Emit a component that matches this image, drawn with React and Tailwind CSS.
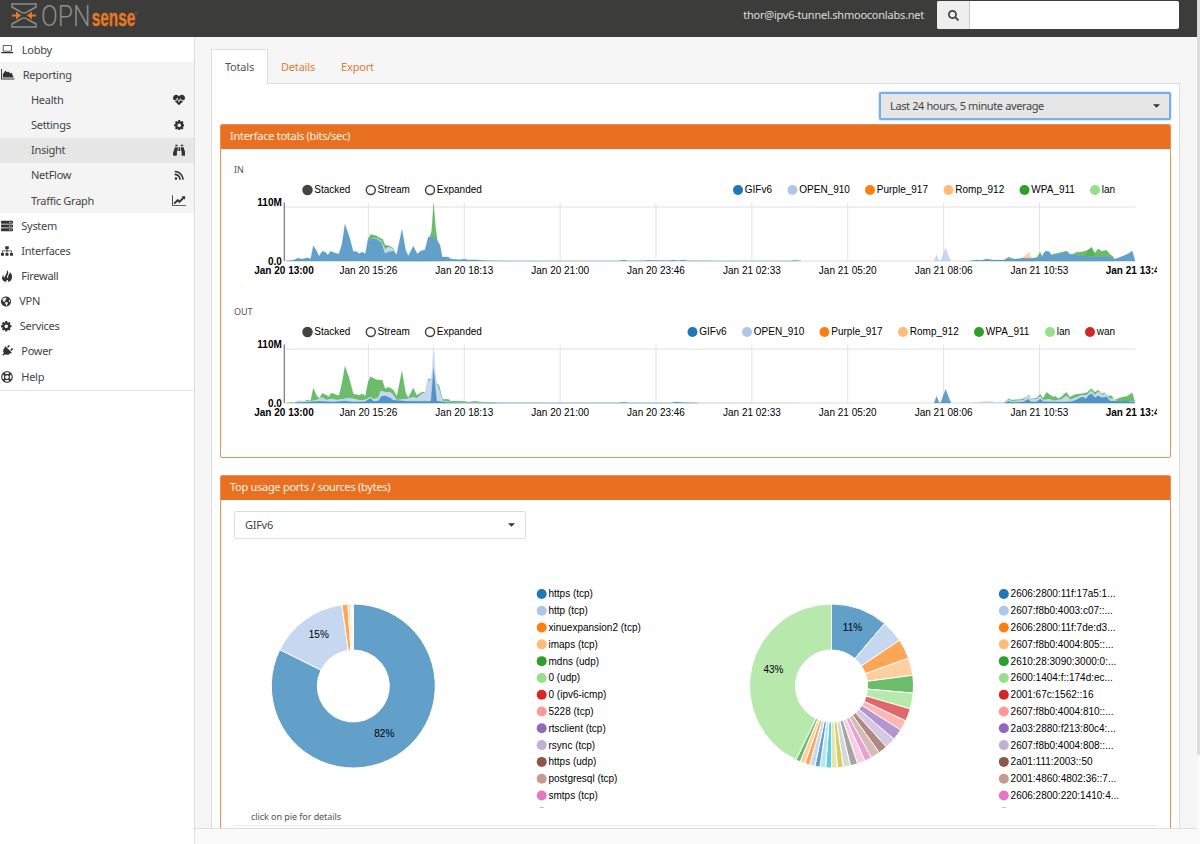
import React from 'react';
import {
  FaBinoculars,
  FaGlobeAmericas,
  FaHeartbeat,
  FaPlug,
  FaRegLifeRing,
  FaRss,
  FaSearch,
  FaServer,
  FaSitemap,
} from 'react-icons/fa';

// d3 category20
const COLORS = [
  '#1f77b4', '#aec7e8', '#ff7f0e', '#ffbb78', '#2ca02c', '#98df8a', '#d62728', '#ff9896', '#9467bd', '#c5b0d5',
  '#8c564b', '#c49c94', '#e377c2', '#f7b6d2', '#7f7f7f', '#c7c7c7', '#bcbd22', '#dbdb8d', '#17becf', '#9edae5',
];

const LaptopIcon = ({ className }) => (
  <svg className={className} viewBox="0 128 1920 1408" fill="currentColor">
    <path d="M416 1152q-66 0-113-47t-47-113v-704q0-66 47-113t113-47h1088q66 0 113 47t47 113v704q0 66-47 113t-113 47h-1088zm-32-864v704q0 13 9.500 22.500t22.500 9.500h1088q13 0 22.500-9.500t9.500-22.500v-704q0-13-9.500-22.500t-22.500-9.500h-1088q-13 0-22.500 9.500t-9.500 22.500zm1376 928h160v96q0 40-47 68t-113 28h-1600q-66 0-113-28t-47-68v-96h1760z" />
  </svg>
);

const AreaIcon = ({ className }) => (
  <svg className={className} viewBox="0 0 14 11" fill="currentColor">
    <path d="M0 0h1v10h13v1H0zM1.800 9V5.500L4.500 1.500l1.700 2L7.500 2.500l2 2 1.500-.5L13.200 9z" />
  </svg>
);

const LineIcon = ({ className }) => (
  <svg className={className} viewBox="0 128 2048 1536" fill="currentColor">
    <path d="M2048 1536v128h-2048v-1536h128v1408h1920zm-128-1248v435q0 21-19.500 29.500t-35.500-7.500l-121-121-633 633q-10 10-23 10t-23-10l-233-233-416 416-192-192 585-585q10-10 23-10t23 10l233 233 464-464-121-121q-16-16-7.500-35.500t29.500-19.500h435q14 0 23 9t9 23z" />
  </svg>
);

const CogIcon = ({ className }) => (
  <svg className={className} viewBox="128 128 1536 1536" fill="currentColor">
    <path d="M1152 896q0-106-75-181t-181-75-181 75-75 181 75 181 181 75 181-75 75-181zm512-109v222q0 12-8 23t-20 13l-185 28q-19 54-39 91 35 50 107 138 10 12 10 25t-9 23q-27 37-99 108t-94 71q-12 0-26-9l-138-108q-44 23-91 38-16 136-29 186-7 28-36 28h-222q-14 0-24.500-8.500t-11.500-21.500l-28-184q-49-16-90-37l-141 107q-10 9-25 9-14 0-25-11-126-114-165-168-7-10-7-23 0-12 8-23 15-21 51-66.500t54-70.500q-27-50-41-99l-183-27q-13-2-21-12.500t-8-23.500v-222q0-12 8-23t19-13l186-28q14-46 39-92-40-57-107-138-10-12-10-24 0-10 9-23 26-36 98.500-107.500t94.500-71.500q13 0 26 10l138 107q44-23 91-38 16-136 29-186 7-28 36-28h222q14 0 24.500 8.500t11.500 21.500l28 184q49 16 90 37l142-107q9-9 24-9 13 0 25 10 129 119 165 170 7 8 7 22 0 12-8 23-15 21-51 66.500t-54 70.500q26 50 41 98l183 28q13 2 21 12.500t8 23.500z" />
  </svg>
);

const FireIcon = ({ className }) => (
  <svg className={className} viewBox="0 0 10 12" fill="currentColor">
    <path d="M4.800 0C7 1.800 6.300 3.600 5.600 5 4.900 6.300 4.700 7.200 5.600 8c.9-.8.6-1.800.6-2.600C7.300 4.300 8 3.300 7.800 2 9.600 3.400 10.200 5.300 10 7.200 9.800 9.800 8.300 11.500 6 12c.5-1 .3-1.700-.6-2.300C4.400 10.300 4 11 4.300 12 1.600 11.500.2 10.200 0 8.300 0 7 .5 5.900 1.500 5c0 1.400.2 2.300 1 3C2.300 6 5.800 3.500 4.800 0z" />
  </svg>
);

const Caret = () => (
  <svg className="w-[7px] h-1" viewBox="0 0 8 4">
    <path d="M0 0h8L4 4z" fill="#333" />
  </svg>
);

const menu = [
  { name: 'Lobby', icon: LaptopIcon, size: 'w-[12.500px] h-[9px]' },
  {
    name: 'Reporting',
    icon: AreaIcon,
    size: 'w-[13.500px] h-[10.500px]',
    children: [
      { name: 'Health', icon: FaHeartbeat, size: 'w-3 h-3' },
      { name: 'Settings', icon: CogIcon, size: 'w-[10.500px] h-[10.500px]' },
      { name: 'Insight', icon: FaBinoculars, size: 'w-[12.500px] h-[12.500px]', active: true },
      { name: 'NetFlow', icon: FaRss, size: 'w-[10.500px] h-[10.500px]' },
      { name: 'Traffic Graph', icon: LineIcon, size: 'w-[14px] h-[11px]' },
    ],
  },
  { name: 'System', icon: FaServer, size: 'w-3 h-3' },
  { name: 'Interfaces', icon: FaSitemap, size: 'w-3 h-3' },
  { name: 'Firewall', icon: FireIcon, size: 'w-3 h-[12px]' },
  { name: 'VPN', icon: FaGlobeAmericas, size: 'w-[10px] h-[11px]' },
  { name: 'Services', icon: CogIcon, size: 'w-[10.500px] h-[10.500px]' },
  { name: 'Power', icon: FaPlug, size: 'w-3 h-3 rotate-45' },
  { name: 'Help', icon: FaRegLifeRing, size: 'w-3 h-3' },
];

const ticks = ['Jan 20 15:26', 'Jan 20 18:13', 'Jan 20 21:00', 'Jan 20 23:46', 'Jan 21 02:33', 'Jan 21 05:20', 'Jan 21 08:06', 'Jan 21 10:53'];

// Samples are [x, height] in thirds of a pixel, drawn back to front.
const inSeries = [
  { color: 4, points: [[249, 58], [252, 68], [260, 80], [277, 75], [291, 67], [295, 66], [302, 47], [314, 46], [327, 38], [335, 20], [340, 0], [432, 0], [437, 72], [442, 90], [448, 174], [454, 100], [459, 62], [474, 0]] },
  { color: 1, white: true, points: [[249, 60], [262, 69], [277, 68], [291, 60], [302, 35], [314, 42], [327, 36], [337, 10]] },
  { color: 0, white: true, points: [[7, 0], [27, 2], [42, 9], [52, 5], [69, 10], [79, 6], [87, 45], [97, 30], [104, 14], [114, 29], [124, 26], [130, 17], [139, 29], [152, 24], [164, 21], [173, 50], [182, 110], [195, 73], [207, 28], [215, 29], [225, 22], [234, 27], [243, 21], [251, 60], [260, 68], [277, 66], [291, 56], [302, 22], [312, 27], [327, 30], [337, 19], [353, 94], [364, 33], [372, 15], [387, 44], [399, 21], [409, 30], [422, 33], [432, 72], [442, 71], [452, 72], [462, 56], [467, 48], [474, 12], [492, 12], [499, 6], [527, 4], [540, 6], [552, 3], [572, 4], [587, 2], [617, 1], [657, 0], [900, 0], [1000, 0], [1020, 3], [1032, 0], [1080, 1], [1090, 2], [1150, 1], [1169, 3], [1180, 1], [1196, 3], [1210, 1], [1300, 0], [1520, 0], [1530, 2], [1550, 0]] },
  { color: 1, points: [[1950, 0], [1957, 19], [1964, 0], [1970, 2], [1984, 40], [1999, 0]] },
  { color: 3, points: [[2210, 5], [2217, 12], [2227, 19], [2234, 26], [2240, 10], [2246, 0]] },
  { color: 5, points: [[2405, 20], [2422, 45], [2430, 20]] },
  { color: 4, points: [[2160, 3], [2173, 12], [2182, 8], [2195, 5], [2257, 10], [2268, 26], [2274, 14], [2280, 14], [2345, 29], [2362, 19], [2377, 26], [2392, 27], [2405, 30], [2414, 35], [2422, 40], [2432, 24], [2442, 37], [2452, 29], [2467, 32], [2477, 20], [2487, 13], [2492, 3]] },
  { color: 0, white: true, points: [[2057, 0], [2077, 3], [2092, 2], [2107, 6], [2127, 3], [2162, 3], [2173, 8], [2187, 5], [2202, 7], [2217, 9], [2232, 7], [2242, 8], [2257, 9], [2268, 14], [2274, 11], [2277, 22], [2285, 30], [2295, 28], [2303, 16], [2314, 20], [2332, 20], [2347, 30], [2357, 19], [2370, 20], [2387, 16], [2407, 15], [2427, 13], [2447, 14], [2467, 14], [2477, 11], [2492, 6], [2507, 11], [2517, 15], [2532, 22], [2544, 30], [2552, 2]] },
];

const outSeries = [
  { color: 4, points: [[7, 0], [32, 2], [44, 7], [54, 3], [69, 9], [79, 6], [87, 44], [97, 22], [105, 14], [114, 29], [127, 23], [134, 18], [141, 30], [164, 22], [173, 58], [182, 110], [195, 73], [207, 27], [225, 23], [234, 28], [243, 20], [251, 60], [258, 79], [277, 70], [294, 68], [302, 43], [314, 47], [327, 39], [338, 20], [353, 96], [364, 30], [372, 16], [387, 45], [397, 23], [414, 33], [423, 32], [432, 73], [439, 71], [459, 58], [464, 53], [475, 11], [492, 11], [499, 6], [537, 5], [552, 3], [572, 5], [597, 2], [637, 0]] },
  { color: 1, white: true, points: [[27, 2], [44, 7], [77, 5], [97, 9], [112, 17], [127, 9], [142, 13], [157, 9], [177, 12], [197, 15], [227, 8], [244, 10], [259, 19], [267, 11], [282, 16], [289, 36], [302, 33], [317, 33], [327, 23], [337, 9], [367, 12], [387, 18], [397, 14], [414, 28], [423, 32], [429, 66], [439, 68], [443, 90], [448, 174], [453, 90], [458, 58], [467, 33], [475, 6], [507, 3], [600, 1], [700, 0], [1540, 0]] },
  { color: 0, points: [[32, 1], [107, 5], [147, 3], [182, 6], [207, 3], [242, 4], [259, 14], [267, 5], [282, 6], [292, 20], [304, 21], [317, 16], [327, 8], [367, 5], [407, 5], [440, 5], [448, 103], [457, 6], [487, 2], [537, 1], [600, 0], [1000, 0], [1020, 2], [1032, 0], [1160, 0], [1175, 3], [1200, 1], [1240, 0]] },
  { color: 0, points: [[1950, 0], [1957, 20], [1965, 0], [1970, 2], [1984, 41], [2000, 0]] },
  { color: 4, points: [[2162, 3], [2173, 13], [2182, 9], [2212, 11], [2224, 16], [2234, 25], [2240, 12], [2257, 15], [2268, 26], [2277, 14], [2287, 32], [2301, 22], [2307, 18], [2314, 20], [2322, 13], [2332, 19], [2346, 32], [2357, 18], [2375, 26], [2392, 28], [2407, 31], [2422, 43], [2432, 32], [2442, 39], [2452, 28], [2462, 31], [2472, 22], [2482, 22], [2492, 9], [2507, 16], [2529, 20], [2544, 31], [2552, 3]] },
  { color: 1, white: true, points: [[2057, 0], [2087, 3], [2107, 5], [2137, 2], [2162, 4], [2173, 10], [2182, 6], [2217, 8], [2224, 14], [2234, 23], [2240, 10], [2257, 12], [2268, 20], [2277, 9], [2295, 11], [2312, 7], [2332, 11], [2347, 22], [2359, 10], [2372, 16], [2392, 23], [2407, 24], [2422, 37], [2432, 24], [2442, 34], [2455, 24], [2465, 30], [2477, 12], [2487, 14], [2499, 5], [2517, 6], [2544, 5], [2552, 1]] },
  { color: 0, points: [[2162, 1], [2173, 5], [2182, 2], [2217, 3], [2232, 11], [2239, 4], [2257, 3], [2268, 12], [2277, 4], [2337, 3], [2362, 4], [2377, 10], [2392, 17], [2399, 17], [2405, 11], [2412, 22], [2422, 28], [2432, 16], [2442, 22], [2452, 16], [2467, 19], [2477, 6], [2507, 5], [2527, 6], [2544, 3], [2552, 1]] },
];

const area = (points) => {
  const last = points[points.length - 1];
  return `M${points[0][0]} 0L${points.map(([x, h]) => `${x} ${-h}`).join('L')}L${last[0]} 0Z`;
};

const controls = [
  { name: 'Stacked', x: 73.5, on: true },
  { name: 'Stream', x: 136.8 },
  { name: 'Expanded', x: 196 },
];

const StackedChart = ({ label, series, legend }) => (
  <div className="pt-[14px]">
    <div className="h-[14px] leading-[14px] text-[9px] tracking-normal text-[#555]">{label}</div>
    <svg className="block w-[923px] h-[114px] overflow-hidden [font-family:'Liberation_Sans',Arial,sans-serif] text-[10px] tracking-normal" viewBox="0 0 923 114">
      {controls.map((c) => (
        <g key={c.name} transform={`translate(${c.x} 13)`}>
          <circle r="4.500" fill={c.on ? '#444' : '#fff'} stroke="#444" strokeWidth="1.500" />
          <text x="6.800" y="3.400">{c.name}</text>
        </g>
      ))}
      {legend.map(([name, x], i) => (
        <g key={name} transform={`translate(${x} 13)`}>
          <circle r="5" fill={COLORS[i]} />
          <text x="6.800" y="3.400">{name}</text>
        </g>
      ))}
      <path d="M50.300 30H901.500" stroke="#e0e0e0" fill="none" />
      {ticks.map((tick, i) => (
        <g key={tick} transform={`translate(${134.4 + i * 95.87} 0)`}>
          <path d="M0 25.500V84" stroke="#e3e3e3" />
          <text x="0" y="97" textAnchor="middle">{tick}</text>
        </g>
      ))}
      <path d="M50.300 84H901.500" stroke="#ddd" />
      <g transform="translate(50.3 84) scale(0.3333)">
        {series.map((s, i) => (
          <g key={i}>
            {s.white && <path d={area(s.points)} fill="#fff" />}
            <path d={area(s.points)} fill={COLORS[s.color]} fillOpacity="0.7" stroke={COLORS[s.color]} strokeOpacity="0.5" strokeWidth="1" />
          </g>
        ))}
      </g>
      <path d="M50.300 25.500V84" stroke="#777" strokeWidth="1.200" />
      <g fontWeight="700">
        <text x="47.800" y="29" textAnchor="end">110M</text>
        <text x="47.800" y="87.500" textAnchor="end">0.0</text>
        <text x="50" y="97" textAnchor="middle">Jan 20 13:00</text>
        <text x="901.500" y="97" textAnchor="middle">Jan 21 13:47</text>
      </g>
    </svg>
  </div>
);

const slice = (from, to) => {
  const at = (deg, r) => {
    const a = (deg * Math.PI) / 180;
    return `${(r * Math.sin(a)).toFixed(2)} ${(-r * Math.cos(a)).toFixed(2)}`;
  };
  const large = to - from > 180 ? 1 : 0;
  return `M${at(from, 82)}A82 82 0 ${large} 1 ${at(to, 82)}L${at(to, 36)}A36 36 0 ${large} 0 ${at(from, 36)}Z`;
};

const portAngles = [0, 296.3, 352, 356.2, 357.8, 358.8, 359.4, 360];
const sourceAngles = [
  0, 40.4, 56.1, 70.1, 82.5, 95, 106.2, 115.2, 122.5, 130.4, 138, 144.4, 150.9, 156, 161.5, 166.7, 171.7, 175.9, 180,
  184.1, 188.1, 191.7, 195.5, 199, 202.5, 205.7, 360,
];

const ports = [
  'https (tcp)', 'http (tcp)', 'xinuexpansion2 (tcp)', 'imaps (tcp)', 'mdns (udp)', '0 (udp)', '0 (ipv6-icmp)',
  '5228 (tcp)', 'rtsclient (tcp)', 'rsync (tcp)', 'https (udp)', 'postgresql (tcp)', 'smtps (tcp)', '',
];
const sources = [
  '2606:2800:11f:17a5:1...', '2607:f8b0:4003:c07::...', '2606:2800:11f:7de:d3...', '2607:f8b0:4004:805::...',
  '2610:28:3090:3000:0:...', '2600:1404:f::174d:ec...', '2001:67c:1562::16', '2607:f8b0:4004:810::...',
  '2a03:2880:f213:80c4:...', '2607:f8b0:4004:808::...', '2a01:111:2003::50', '2001:4860:4802:36::7...',
  '2606:2800:220:1410:4...', '',
];

const PieChart = ({ cx, legendX, angles, labels, legend }) => (
  <svg className="block shrink-0 w-[462px] h-[253px] overflow-hidden [font-family:'Liberation_Sans',Arial,sans-serif] text-[10px] tracking-normal" viewBox="0 0 462 253">
    <g transform={`translate(${cx} 131)`}>
      {angles.slice(1).map((to, i) => (
        <path key={to} d={slice(angles[i], to)} fill={COLORS[i % 20]} fillOpacity="0.7" stroke="#fff" />
      ))}
      {labels.map(([text, x, y]) => (
        <text key={text} x={x} y={y} textAnchor="middle">{text}</text>
      ))}
    </g>
    {legend.map((name, i) => (
      <g key={i} transform={`translate(${legendX} ${39 + i * 16.79})`}>
        <circle r="5" fill={i === 13 ? '#999' : COLORS[i]} />
        {name && <text x="6.800" y="3.400">{name}</text>}
      </g>
    ))}
  </svg>
);

const Logo = () => (
  <svg className="w-[130px] h-[37px] ml-[10px] shrink-0 overflow-visible tracking-normal" viewBox="0 0 130 37">
    <g fill="none" stroke="#8c8c8a" strokeWidth="1.500">
      <path d="M2 4H26V7L18 11.500Q14 14.500 10 11.500L2 7ZM2 27H26V24L18 19.500Q14 16.500 10 19.500L2 24Z" />
    </g>
    <path d="M2 14.500h4v-3l5 4-5 4v-3H2zM26 14.500h-4v-3l-5 4 5 4v-3h4z" fill="#e87722" />
    <text x="31" y="25.800" textLength="49.500" lengthAdjust="spacingAndGlyphs" className="[font-family:Roboto,sans-serif] text-[29.500px] font-light" fill="#8c8c8a">OPN</text>
    <text x="81.800" y="26.300" textLength="43.500" lengthAdjust="spacingAndGlyphs" className="[font-family:'Liberation_Sans',sans-serif] text-[23px] font-bold" fill="#e87722" stroke="#e87722" strokeWidth="0.400">sense</text>
    <circle cx="126" cy="13" r="1" fill="none" stroke="#777" strokeWidth="0.500" />
  </svg>
);

const Header = () => (
  <header className="flex items-start justify-between h-[37px] w-[1197px] shrink-0 bg-[#3c3c3b]">
    <Logo />
    <div className="flex items-center mt-px mr-[18px]">
      <span className="mr-[13px] tracking-[-0.230px] text-[#ddd]">thor@ipv6-tunnel.shmooconlabs.net</span>
      <div className="flex w-[242px] h-7 overflow-hidden rounded-[2px] bg-white">
        <div className="flex items-center justify-center w-[33px] bg-[#eee] border-r border-[#ccc] text-[#444]">
          <FaSearch className="w-[11px] h-[11px]" />
        </div>
        <div className="flex-1" />
      </div>
    </div>
  </header>
);

const Sidebar = () => (
  <nav className="w-[195px] shrink-0 bg-white border-r border-[#ddd] text-[#444]">
    <div className="border-b border-[#e3e3e3] pb-px">
      {menu.map(({ name, icon: Icon, size, children }) => (
        <div key={name} className={children ? 'bg-[#f4f4f4]' : ''}>
          <div className="flex items-center h-[25.170px] pl-px gap-[8.300px]">
            <Icon className={`shrink-0 text-[#333] ${size}`} />
            {name}
          </div>
          {children?.map(({ name: label, icon: ChildIcon, size: childSize, active }) => (
            <div key={label} className={`flex items-center justify-between h-[25.170px] pl-[31px] pr-2 ${active ? 'bg-[#e6e6e6]' : ''}`}>
              {label}
              <span className="flex justify-center w-[14px]">
                <ChildIcon className={`shrink-0 text-[#333] ${childSize}`} />
              </span>
            </div>
          ))}
        </div>
      ))}
    </div>
  </nav>
);

const Panel = ({ title, className, children }) => (
  <section className={`rounded-[2px] border border-[#e4925a] overflow-hidden bg-white ${className}`}>
    <h3 className="h-[23.500px] leading-[22px] pl-[9px] bg-[#e87020] text-[#fff3e8]">{title}</h3>
    <div className="pl-[13px]">{children}</div>
  </section>
);

const inLegend = [['GIFv6', 504], ['OPEN_910', 558.5], ['Purple_917', 636], ['Romp_912', 714.5], ['WPA_911', 790.5], ['lan', 861]];
const outLegend = [['GIFv6', 458.5], ['OPEN_910', 513], ['Purple_917', 590.5], ['Romp_912', 669], ['WPA_911', 745], ['lan', 816], ['wan', 856]];

export default function App() {
  return (
    <div className="flex flex-col w-[1200px] h-[844px] overflow-hidden bg-[#fafafa] [font-family:'Noto_Sans',sans-serif] text-[11px] leading-[16px] tracking-[-0.280px]">
      <div className="flex h-full">
        <div className="flex flex-col w-[1197px]">
          <Header />
          <div className="flex flex-1 min-h-0">
            <Sidebar />
            <div className="flex flex-col flex-1 min-w-0">
              <main className="h-[791px] overflow-hidden pt-3 pl-4 pr-[17px] bg-[#f6f6f6]">
                <div className="flex relative z-10 tracking-[-0.180px]">
                  <div className="w-[57px] h-[35px] pt-[9px] text-center bg-white border border-b-0 border-[#ddd] text-[#555]">Totals</div>
                  <div className="w-[60px] h-[34px] pt-[10px] text-center text-[#e07a35]">Details</div>
                  <div className="w-[59px] h-[34px] pt-[10px] text-center text-[#e07a35]">Export</div>
                </div>
                <div className="h-[760px] -mt-px pl-2 pr-2 pt-[8px] bg-white border border-[#ddd]">
                  <div className="flex justify-end">
                    <div className="flex items-center justify-between w-[292px] h-[28px] pl-[9px] pr-[9px] rounded-[2px] bg-[#e6e6e6] border-2 border-[#78aeea] shadow-[0_0_2px_#78aeea] tracking-[-0.380px] text-[#444]">
                      Last 24 hours, 5 minute average
                      <Caret />
                    </div>
                  </div>
                  <Panel title="Interface totals (bits/sec)" className="mt-[4px] h-[334px]">
                    <StackedChart label="IN" series={inSeries} legend={inLegend} />
                    <StackedChart label="OUT" series={outSeries} legend={outLegend} />
                  </Panel>
                  <Panel title="Top usage ports / sources (bytes)" className="mt-[17px] h-[400px]">
                    <div className="flex items-center justify-between w-[292px] h-7 mt-[11.500px] pl-[10px] pr-[10px] rounded-[2px] border border-[#ddd] text-[#444]">
                      GIFv6
                      <Caret />
                    </div>
                    <div className="flex mt-[16px]">
                      <PieChart cx={119.3} legendX={307.7} angles={portAngles} labels={[['15%', -34.5, -48], ['82%', 31, 51]]} legend={ports} />
                      <PieChart cx={135.5} legendX={307.8} angles={sourceAngles} labels={[['11%', 21, -55], ['43%', -58, -13]]} legend={sources} />
                    </div>
                    <div className="h-[18px] w-[923px] pl-[17px] border-b border-[#e8e8e8] text-[9px] leading-[18px] tracking-[-0.060px] text-[#555]">click on pie for details</div>
                  </Panel>
                </div>
              </main>
              <footer className="flex-1 border-t border-[#ddd] bg-[#fafafa]" />
            </div>
          </div>
        </div>
        <div className="w-[3px] h-[755px] bg-[#dcdcdc]" />
      </div>
    </div>
  );
}
